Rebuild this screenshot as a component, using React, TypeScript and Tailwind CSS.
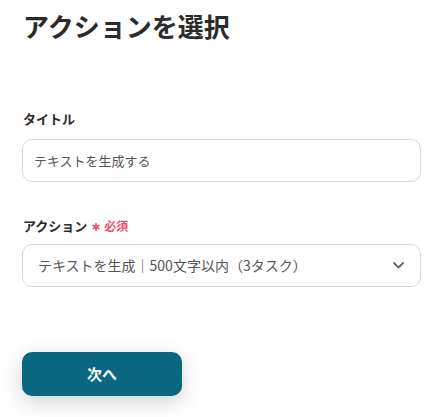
import React from "react";

export default function App() {
  return (
    <div
      className="w-[445px] h-[417px] bg-white text-[#333333] overflow-hidden"
      style={{ fontFamily: '"Noto Sans CJK JP", "Noto Sans", sans-serif' }}
    >
      <div className="px-[22px] pt-[7px]">
        <h1 className="text-[26px] leading-[38px] font-bold text-[#2b2b2b] pl-[1px]">アクションを選択</h1>

        <div className="mt-[64px]">
          <div className="text-[13px] leading-[20px] font-bold text-[#2b2b2b] pl-[1px]">タイトル</div>
          <div className="mt-[10px] h-[43px] w-[399px] rounded-[10px] border border-[#d4d7dc] flex items-center px-[11px]">
            <span className="text-[13px] text-[#555555]">テキストを生成する</span>
          </div>
        </div>

        <div className="mt-[34px]">
          <div className="flex items-center h-[20px] text-[13px] leading-[20px] font-bold pl-[1px]">
            <span className="text-[#2b2b2b]">アクション</span>
            <svg className="ml-[5px] mt-[1px]" width="8" height="8" viewBox="0 0 8 8" fill="none">
              <g stroke="#f0506a" strokeWidth="1.7" strokeLinecap="round">
                <path d="M4 0.8V7.2" />
                <path d="M1.2 2.4L6.8 5.6" />
                <path d="M1.2 5.6L6.8 2.4" />
              </g>
            </svg>
            <span className="ml-[4px] text-[12px] text-[#f0506a]">必須</span>
          </div>
          <div className="mt-[8px] h-[43px] w-[399px] rounded-[10px] border border-[#d4d7dc] flex items-center justify-between pl-[15px] pr-[16px]">
            <span className="text-[14px] text-[#555555]">テキストを生成｜500文字以内（3タスク）</span>
            <svg width="11" height="7" viewBox="0 0 11 7" fill="none">
              <path d="M1 1L5.5 5.5L10 1" stroke="#666666" strokeWidth="1.8" strokeLinecap="round" strokeLinejoin="round" />
            </svg>
          </div>
        </div>

        <div className="mt-[65px]">
          <button className="w-[160px] h-[44px] rounded-[10px] bg-[#0b6780] text-white text-[15px] font-bold shadow-[0_6px_20px_rgba(0,0,0,0.18)]">
            次へ
          </button>
        </div>
      </div>
    </div>
  );
}
